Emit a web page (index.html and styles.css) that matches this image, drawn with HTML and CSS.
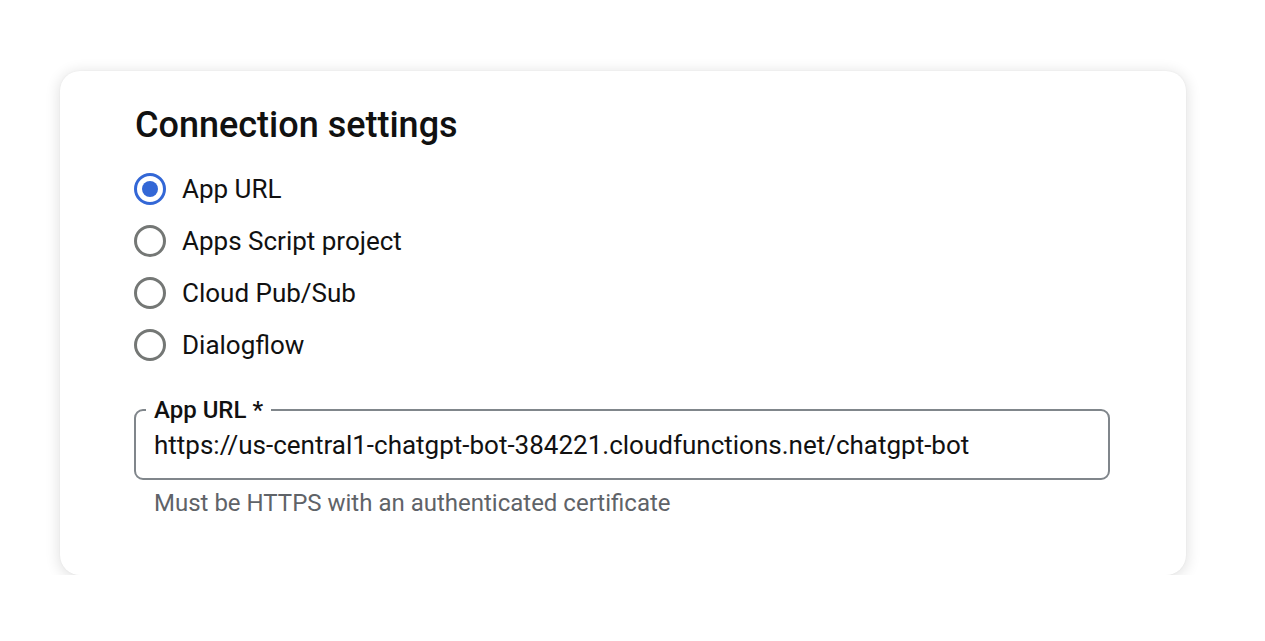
FILE: index.html
```html
<!DOCTYPE html>
<html>
<head>
<meta charset="utf-8">
<link rel="stylesheet" href="styles.css">
</head>
<body>
<div class="card">
  <h2 class="title">Connection settings</h2>
  <div class="radios">
    <label class="radio-row"><span class="radio checked"></span><span class="radio-label">App URL</span></label>
    <label class="radio-row"><span class="radio"></span><span class="radio-label">Apps Script project</span></label>
    <label class="radio-row"><span class="radio"></span><span class="radio-label">Cloud Pub/Sub</span></label>
    <label class="radio-row"><span class="radio"></span><span class="radio-label">Dialogflow</span></label>
  </div>
  <div class="field">
    <span class="field-label">App URL *</span>
    <div class="field-value">https://us-central1-chatgpt-bot-384221.cloudfunctions.net/chatgpt-bot</div>
  </div>
  <div class="helper">Must be HTTPS with an authenticated certificate</div>
</div>
</body>
</html>
```
FILE: styles.css
```css
html, body {
  margin: 0;
  padding: 0;
  background: #ffffff;
}
body {
  font-family: Roboto, "Liberation Sans", sans-serif;
  color: #202124;
}
.card {
  margin: 71px 0 0 60px;
  width: 1126px;
  height: 504px;
  box-sizing: border-box;
  background: #fff;
  border-radius: 20px;
  box-shadow: 0 2px 14px 2px rgba(0,0,0,0.11), 0 0 2px rgba(0,0,0,0.05);
  padding: 32px 76px 0 74px;
}
.title {
  margin: 0;
  font-size: 36px;
  font-weight: 500;
  line-height: 44px;
  color: #111111;
  padding-left: 1px;
}
.radios {
  margin-top: 26px;
  display: flex;
  flex-direction: column;
  gap: 20px;
}
.radio-row {
  display: flex;
  align-items: center;
  gap: 16px;
  height: 32px;
}
.radio {
  width: 32px;
  height: 32px;
  flex: none;
  box-sizing: border-box;
  border-radius: 50%;
  border: 3.5px solid #747775;
  display: flex;
  align-items: center;
  justify-content: center;
}
.radio.checked {
  border-color: #3367d6;
}
.radio.checked::after {
  content: "";
  width: 16px;
  height: 16px;
  border-radius: 50%;
  background: #3367d6;
}
.radio-label {
  font-size: 26px;
  color: #111111;
}
.field {
  position: relative;
  margin-top: 48px;
  height: 71px;
  box-sizing: border-box;
  border: 2px solid #80868b;
  border-radius: 9px;
  padding: 0 18px;
  display: flex;
  align-items: center;
}
.field-label {
  position: absolute;
  top: -15px;
  left: 10px;
  padding: 0 8px;
  background: #fff;
  font-size: 24px;
  font-weight: 500;
  line-height: 28px;
  color: #111111;
}
.field-value {
  font-size: 26px;
  color: #111111;
}
.helper {
  margin-top: 9px;
  padding-left: 20px;
  font-size: 24px;
  line-height: 28px;
  color: #5f6368;
}
```
